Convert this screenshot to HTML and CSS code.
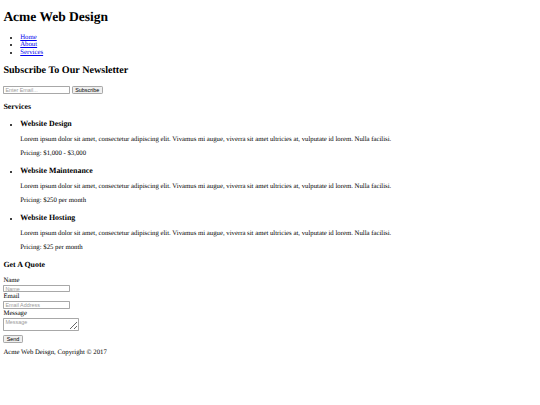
FILE: index.html
```html
<!DOCTYPE html>
<html lang="en">
<head>
<meta charset="utf-8">
<title>Acme Web Design</title>
<link rel="stylesheet" href="styles.css">
</head>
<body class="page">
  <header class="site-header">
    <h1 class="brand">Acme Web Design</h1>
    <nav>
      <ul class="nav-list">
        <li><a class="nav-link" href="#">Home</a></li>
        <li><a class="nav-link" href="#">About</a></li>
        <li><a class="nav-link" href="#">Services</a></li>
      </ul>
    </nav>
  </header>

  <section class="newsletter">
    <h2 class="section-title">Subscribe To Our Newsletter</h2>
    <form class="newsletter-form">
      <input class="field" type="email" placeholder="Enter Email...">
      <button class="btn" type="button">Subscribe</button>
    </form>
  </section>

  <section class="services">
    <h3 class="sub-title">Services</h3>
    <ul class="service-list">
      <li>
        <h3 class="sub-title">Website Design</h3>
        <p class="text">Lorem ipsum dolor sit amet, consectetur adipiscing elit. Vivamus mi augue, viverra sit amet ultricies at, vulputate id lorem. Nulla facilisi.</p>
        <p class="text">Pricing: $1,000 - $3,000</p>
      </li>
      <li>
        <h3 class="sub-title">Website Maintenance</h3>
        <p class="text">Lorem ipsum dolor sit amet, consectetur adipiscing elit. Vivamus mi augue, viverra sit amet ultricies at, vulputate id lorem. Nulla facilisi.</p>
        <p class="text">Pricing: $250 per month</p>
      </li>
      <li>
        <h3 class="sub-title">Website Hosting</h3>
        <p class="text">Lorem ipsum dolor sit amet, consectetur adipiscing elit. Vivamus mi augue, viverra sit amet ultricies at, vulputate id lorem. Nulla facilisi.</p>
        <p class="text">Pricing: $25 per month</p>
      </li>
    </ul>
  </section>

  <section class="quote">
    <h3 class="sub-title">Get A Quote</h3>
    <form class="quote-form">
      <label class="label">Name</label>
      <input class="field block" type="text" placeholder="Name">
      <label class="label">Email</label>
      <input class="field block" type="email" placeholder="Email Address">
      <label class="label">Message</label>
      <textarea class="field area" placeholder="Message"></textarea>
      <button class="btn send" type="button">Send</button>
    </form>
  </section>

  <footer>
    <p class="text">Acme Web Deisgn, Copyright &copy; 2017</p>
  </footer>
</body>
</html>
```

FILE: styles.css
```css
html {
  font-size: 6.75px;
}

.page {
  margin: 0 3.375px 3.375px;
  font-family: "Liberation Serif", "Times New Roman", serif;
  font-size: 6.75px;
  line-height: 7.76px;
  color: #000;
  background: #fff;
  text-rendering: geometricPrecision;
}

.brand {
  font-size: 13.5px;
  line-height: 15.5px;
  font-weight: bold;
  margin: 9.045px 0;
}

.nav-list {
  margin: 6.75px 0;
  padding-left: 16.875px;
  list-style: disc;
}

.nav-link {
  color: #0000ee;
  text-decoration: underline;
}

.section-title {
  font-size: 10.125px;
  line-height: 11.64px;
  font-weight: bold;
  margin: 8.4px 0;
}

.sub-title {
  font-size: 7.9px;
  line-height: 9.08px;
  font-weight: bold;
  margin: 7.9px 0;
}

.newsletter-form {
  display: flex;
  align-items: flex-start;
  gap: 2px;
  margin: 0;
  padding-top: 1.2px;
}

.quote-form {
  margin: 0;
}

.service-list {
  margin: 6.75px 0;
  padding-left: 16.875px;
  list-style: disc;
}

.text {
  margin: 6.75px 0;
}

.field {
  box-sizing: border-box;
  width: 66.5px;
  height: 7.4px;
  margin: 0;
  padding: 0 1px;
  border: 0.6px solid #a8a8a8;
  border-radius: 0.8px;
  font-family: "Liberation Sans", Arial, sans-serif;
  font-size: 5.4px;
  line-height: 6px;
  color: #000;
  background: #fff;
}

.field::placeholder {
  color: #9a9a9a;
}

.block {
  display: block;
  margin: 0.2px 0 1px;
}

.area {
  display: block;
  width: 76px;
  height: 12.8px;
  margin: 0.2px 0 0;
  padding: 0.6px 1px;
  resize: vertical;
}

.label {
  display: block;
  line-height: 7.76px;
}

.btn {
  box-sizing: border-box;
  height: 7.4px;
  margin: 0;
  padding: 0 2.4px;
  border: 0.6px solid #a8a8a8;
  border-radius: 1.2px;
  background: #efefef;
  font-family: "Liberation Sans", Arial, sans-serif;
  font-size: 5.4px;
  line-height: 6px;
  color: #000;
}

.send {
  display: block;
  margin-top: 4.6px;
}
```
